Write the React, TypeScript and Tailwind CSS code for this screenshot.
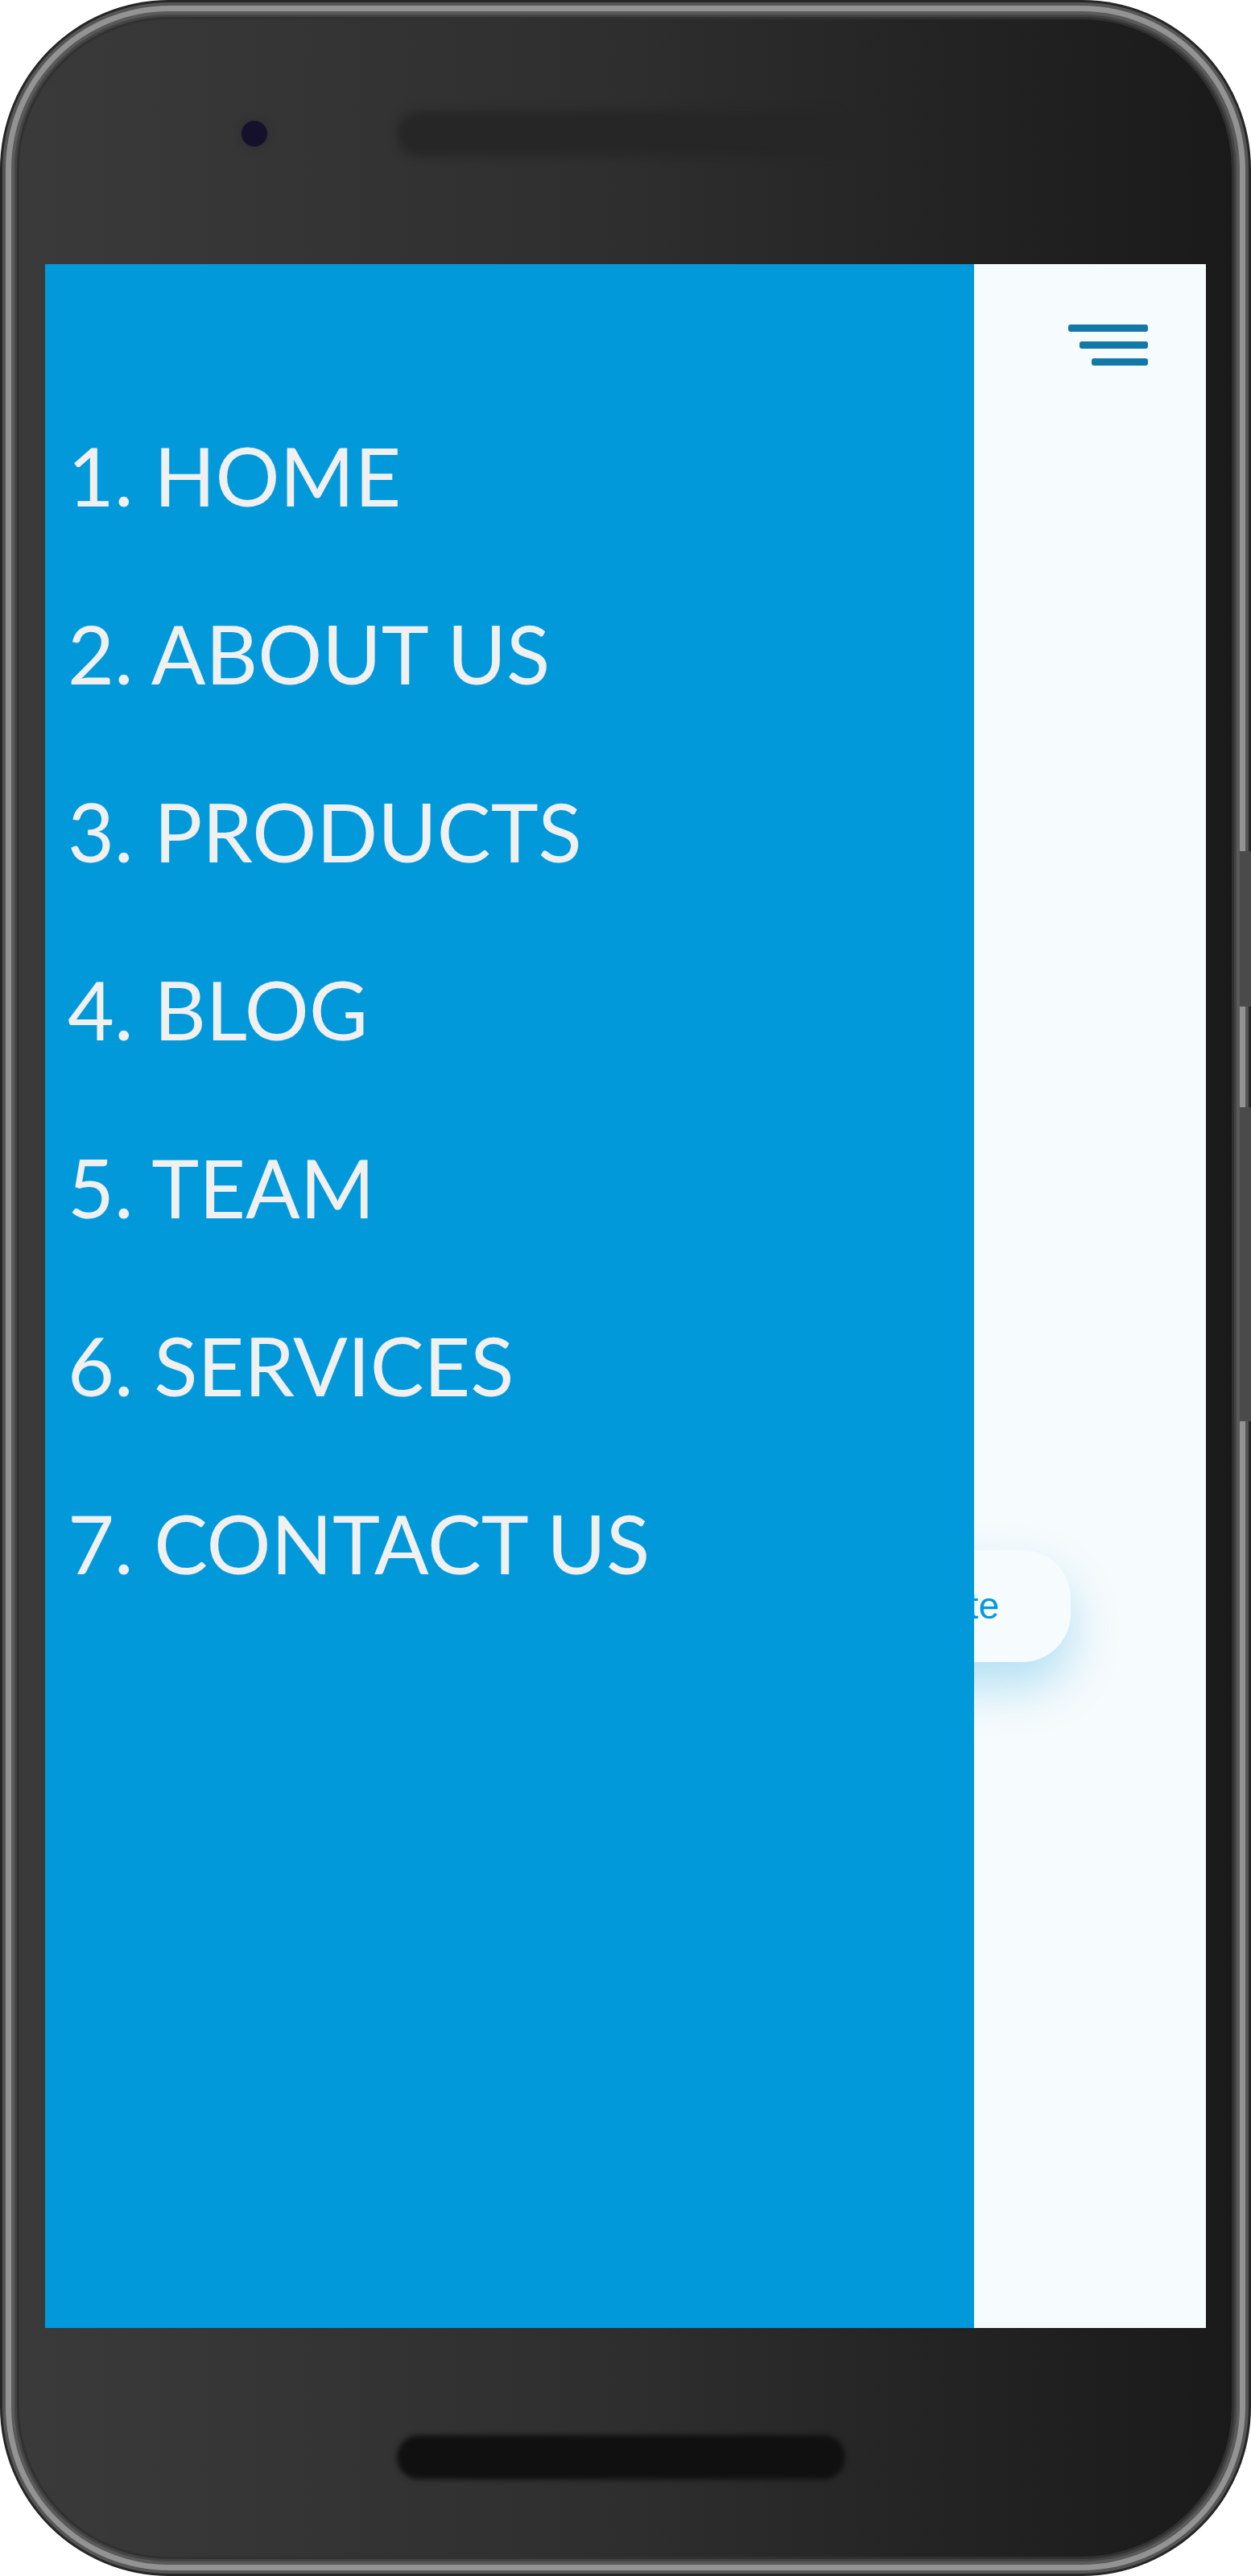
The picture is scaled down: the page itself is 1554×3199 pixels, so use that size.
const menu = ['HOME', 'ABOUT US', 'PRODUCTS', 'BLOG', 'TEAM', 'SERVICES', 'CONTACT US'];

function Hamburger() {
    return (
        <button className="flex flex-col items-end gap-[12px]" aria-label="Menu">
            <span className="block h-[9px] w-[99px] rounded-[3px] bg-[#1378a8]" />
            <span className="block h-[9px] w-[85px] rounded-[3px] bg-[#1378a8]" />
            <span className="block h-[9px] w-[70px] rounded-[3px] bg-[#1378a8]" />
        </button>
    );
}

function Drawer() {
    return (
        <nav className="absolute inset-y-0 left-0 w-[1154px] bg-[#0299db] pl-[28px] pt-[152px]">
            <ul className="text-[100px] leading-[221px] text-[#f0f0f0]" style={{ fontFamily: 'Lato, "Noto Sans", sans-serif' }}>
                {menu.map((item, i) => (
                    <li key={item} className="whitespace-nowrap">
                        {i + 1}. {item}
                    </li>
                ))}
            </ul>
        </nav>
    );
}

function Screen() {
    return (
        <div className="relative h-[2563px] overflow-hidden bg-[#f6fbfd]">
            <header className="flex justify-end pt-[75px] pr-[72px]">
                <Hamburger />
            </header>
            <main className="flex justify-end pr-[168px] pt-[1471px]">
                <button
                    className="flex h-[139px] items-center rounded-[60px] bg-[#f6fbfd] px-[89px] text-[46px] text-[#0299dc] shadow-[0_30px_60px_rgba(2,153,219,0.28)]"
                    style={{ fontFamily: '"Liberation Sans", Arial, sans-serif' }}
                >
                    Get a Quote
                </button>
            </main>
            <Drawer />
        </div>
    );
}

export default function App() {
    return (
        <div className="h-[3199px] w-[1554px] bg-white">
            <div className="relative h-full rounded-[210px] bg-[#262626] p-[3px]">
                <div className="h-full rounded-[207px] bg-[#555555] p-[4px]">
                    <div className="h-full rounded-[203px] bg-[#939393] p-[7px]">
                        <div className="h-full rounded-[196px] bg-[#5a5a5a] p-[4px]">
                            <div className="h-full rounded-[192px] bg-[#444444] p-[3px]">
                                <div className="h-full rounded-[189px] bg-[#313131] p-[3px]">
                                    <div className="flex h-full flex-col rounded-[186px] bg-linear-to-r from-[#3a3a3a] via-[#2e2e2e] to-[#1a1a1a] px-[32px]">
                                        <div className="flex h-[304px] items-center pb-[20px]">
                                            <span className="ml-[244px] block h-[32px] w-[32px] rounded-full bg-[#15112a] shadow-[0_0_10px_rgba(40,30,60,0.6)]" />
                                            <span className="ml-[161px] block h-[56px] w-[557px] rounded-full bg-[#262626] blur-[6px]" />
                                        </div>
                                        <Screen />
                                        <div className="flex flex-1 items-center pt-[36px]">
                                            <span className="ml-[437px] block h-[55px] w-[557px] rounded-full bg-[#101010] blur-[3px]" />
                                        </div>
                                    </div>
                                </div>
                            </div>
                        </div>
                    </div>
                </div>
                {/* side keys */}
                <span className="absolute right-0 top-[1057px] block h-[193px] w-[14px] bg-[#4a4a4a]" />
                <span className="absolute right-0 top-[1375px] block h-[390px] w-[14px] bg-[#4a4a4a]" />
            </div>
        </div>
    );
}
